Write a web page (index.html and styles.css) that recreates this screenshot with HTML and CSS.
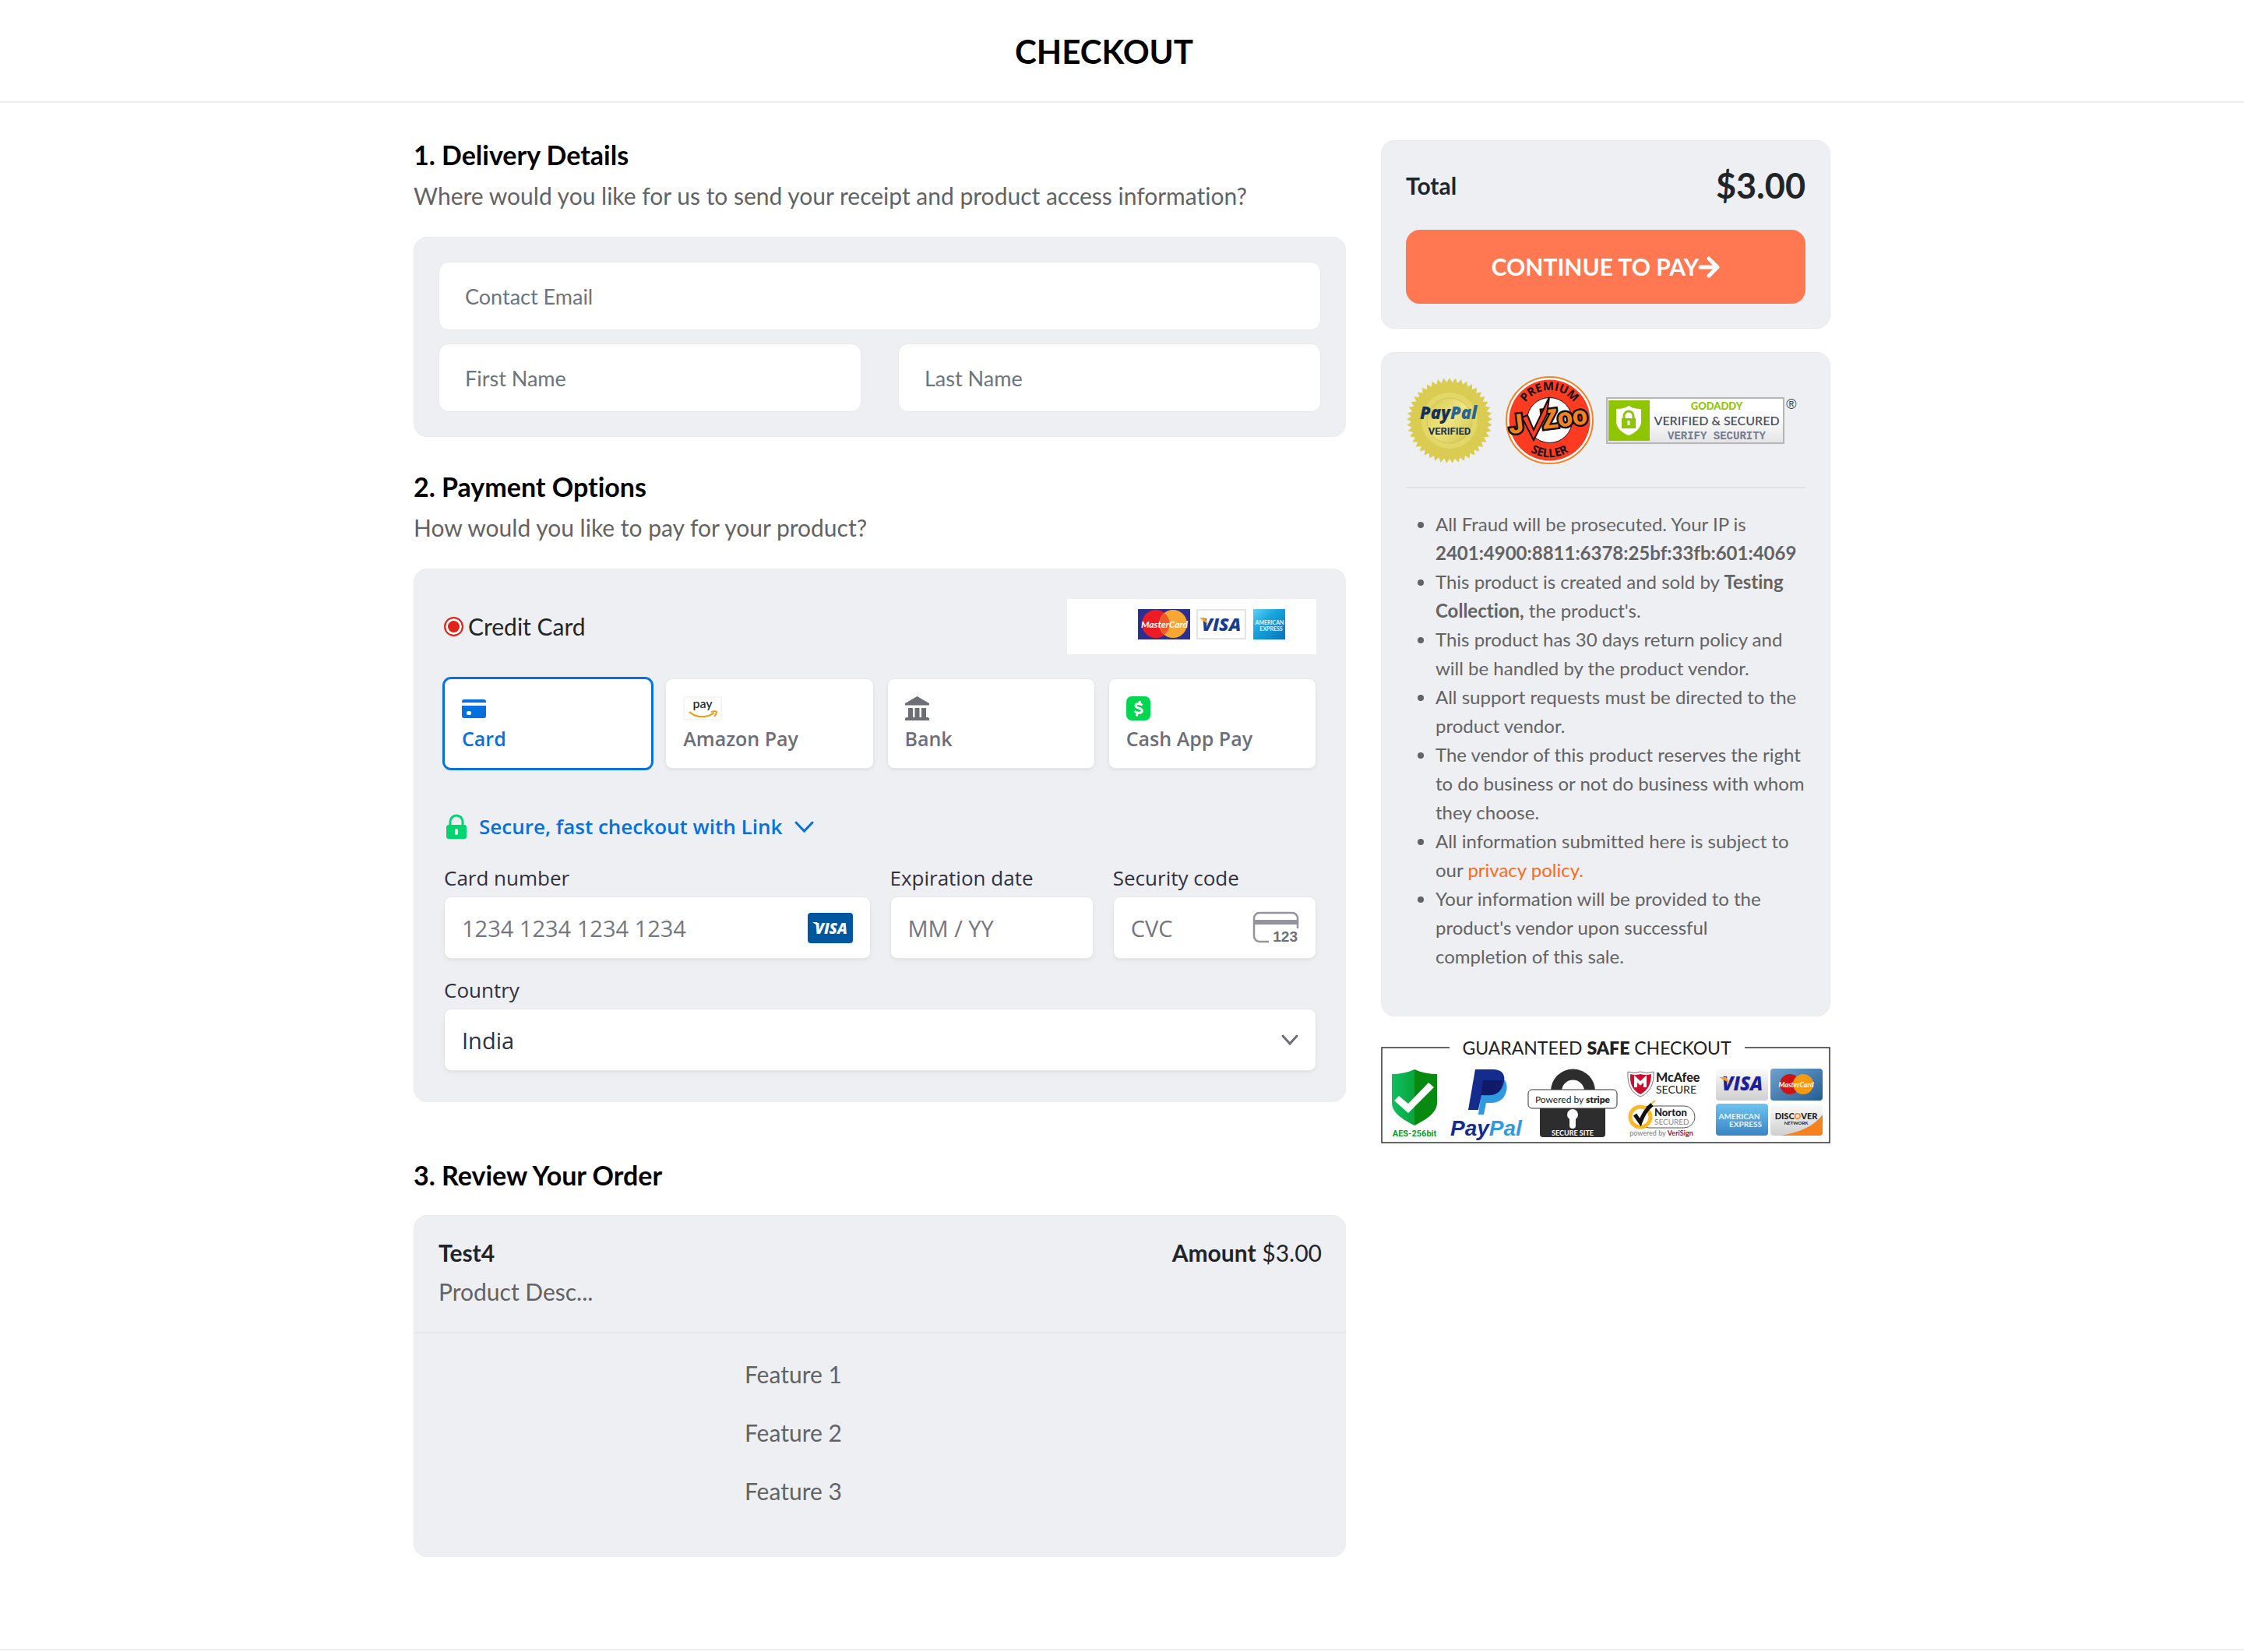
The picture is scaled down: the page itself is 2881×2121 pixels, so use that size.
FILE: index.html
```html
<!DOCTYPE html>
<html lang="en">
<head>
  <meta charset="UTF-8">
  <title>Checkout</title>
  <meta name="viewport" content="width=device-width, initial-scale=1">
  <link rel="stylesheet" href="styles.css">
</head>
<body>
  <header class="page-header">
    <div class="container">
      <h1>CHECKOUT</h1>
    </div>
  </header>

  <main class="container checkout">
    <form class="steps" id="checkout-form">
      <section class="step">
        <h2>1. Delivery Details</h2>
        <p class="lead">Where would you like for us to send your receipt and product access information?</p>
        <div class="panel delivery">
          <input class="text-input wide" type="email" placeholder="Contact Email" aria-label="Contact Email">
          <input class="text-input" type="text" placeholder="First Name" aria-label="First Name">
          <input class="text-input" type="text" placeholder="Last Name" aria-label="Last Name">
        </div>
      </section>

      <section class="step">
        <h2>2. Payment Options</h2>
        <p class="lead">How would you like to pay for your product?</p>
        <div class="panel payment">
          <div class="method">
            <label class="method-label"><input type="radio" name="method" checked>Credit Card</label>
            <svg class="brands" viewBox="0 0 320 71" role="img" aria-label="MasterCard, Visa, American Express">
              <defs>
                <linearGradient id="amex-sq" x1="0" y1="0" x2="1" y2="1">
                  <stop offset="0" stop-color="#5fd0f5"/>
                  <stop offset="0.4" stop-color="#17a5de"/>
                  <stop offset="1" stop-color="#0a72b8"/>
                </linearGradient>
              </defs>
              <rect width="320" height="71" fill="#fff"/>
              <rect x="91" y="13" width="67" height="39" fill="#2b2f8f"/>
              <circle cx="114" cy="32" r="18" fill="#ed1c24"/>
              <circle cx="136" cy="32" r="18" fill="#f6a832"/>
              <path d="M125 18a18 18 0 0 1 0 28a18 18 0 0 1 0-28z" fill="#ee5a28"/>
              <text x="125" y="37" class="mc-text">MasterCard</text>
              <rect x="167" y="14" width="62" height="37" fill="#fff" stroke="#e4e4e4" stroke-width="2"/>
              <text x="198" y="41" class="visa-text">VISA</text>
              <path d="M170 24h7l4 9z" fill="#f6a21b"/>
              <rect x="239" y="13" width="41" height="39" fill="url(#amex-sq)"/>
              <text x="260" y="33" class="amex-text small">AMERICAN</text>
              <text x="262" y="41" class="amex-text small">EXPRESS</text>
            </svg>
          </div>

          <div class="tabs">
            <button type="button" class="tab selected">
              <svg width="31" height="31" viewBox="0 0 31 31"><path d="M3 4h25a3 3 0 0 1 3 3v1H0V7a3 3 0 0 1 3-3zM0 12h31v13a3 3 0 0 1-3 3H3a3 3 0 0 1-3-3zM8 19a2 2 0 0 0-2 2v1a2 2 0 0 0 2 2h2a2 2 0 0 0 2-2v-1a2 2 0 0 0-2-2z" fill="#0570de" fill-rule="evenodd"/></svg>
              Card
            </button>
            <button type="button" class="tab">
              <svg width="50" height="31" viewBox="0 0 50 31">
                <rect x="1" y="1" width="48" height="29" rx="1" fill="#fff" stroke="#ececec"/>
                <text x="25" y="15" class="amazon-text">pay</text>
                <path d="M8 20c9 8 23 8 32 1" fill="none" stroke="#f79400" stroke-width="2"/>
                <path d="M36 20c3-1 6-1 7 0c0 2-1 4-3 6" fill="none" stroke="#f79400" stroke-width="2"/>
              </svg>
              Amazon Pay
            </button>
            <button type="button" class="tab">
              <svg width="31" height="31" viewBox="0 0 31 31"><path d="M15.500 0L31 9v2.500H0V9zM4 15h6v12H4zM12.500 15h6v12h-6zM21 15h6v12h-6zM2 27h27a2 2 0 0 1 2 2v2H0v-2a2 2 0 0 1 2-2z" fill="#6d6e78"/></svg>
              Bank
            </button>
            <button type="button" class="tab">
              <svg width="31" height="31" viewBox="0 0 31 31">
                <rect width="31" height="31" rx="7" fill="#00d64f"/>
                <path d="M20.500 11.500c-3-3-8.500-2.500-8.500.6c0 3.800 8.300 2.300 8.300 6.300c0 3.400-6 4-9.800.6M17.500 6l-.8 3.500M14.200 21.500l-.8 4" fill="none" stroke="#fff" stroke-width="3"/>
              </svg>
              Cash App Pay
            </button>
          </div>

          <button type="button" class="link-toggle">
            <svg width="26" height="32" viewBox="0 0 26 32">
              <path d="M5 16V10a8 8 0 0 1 16 0v6" fill="none" stroke="#00d66f" stroke-width="3"/>
              <path d="M3 14h20a3 3 0 0 1 3 3v12a3 3 0 0 1-3 3H3a3 3 0 0 1-3-3V17a3 3 0 0 1 3-3zM13 19a2 2 0 0 0-2 2v4a2 2 0 0 0 4 0v-4a2 2 0 0 0-2-2z" fill="#00d66f" fill-rule="evenodd"/>
            </svg>
            Secure, fast checkout with Link
            <svg width="25" height="15" viewBox="0 0 25 15"><path d="M2 2l10.500 11L23 2" fill="none" stroke="#0570de" stroke-width="3" stroke-linecap="round"/></svg>
          </button>

          <div class="card-fields">
            <div class="field">
              <label for="card-number">Card number</label>
              <div class="control">
                <input id="card-number" type="text" placeholder="1234 1234 1234 1234">
                <svg width="58" height="39" viewBox="0 0 58 39" role="img" aria-label="Visa">
                  <rect width="58" height="39" rx="4" fill="#00579f"/>
                  <text x="30" y="27" class="visa-chip">VISA</text>
                  <path d="M6 12h6l3 6z" fill="#fff"/>
                </svg>
              </div>
            </div>
            <div class="field">
              <label for="expiry">Expiration date</label>
              <div class="control">
                <input id="expiry" type="text" placeholder="MM / YY">
              </div>
            </div>
            <div class="field">
              <label for="cvc">Security code</label>
              <div class="control">
                <input id="cvc" type="text" placeholder="CVC">
                <svg width="58" height="44" viewBox="0 -2 58 44">
                  <path d="M20 38H8a7 7 0 0 1-7-7V8a7 7 0 0 1 7-7h42a7 7 0 0 1 7 7v13" fill="none" stroke="#93949e" stroke-width="2.500"/>
                  <rect x="1" y="10" width="56" height="6" fill="#93949e"/>
                  <text x="57" y="38" class="cvc-text">123</text>
                </svg>
              </div>
            </div>
            <div class="field full">
              <label for="country">Country</label>
              <div class="control">
                <select id="country">
                  <option>India</option>
                </select>
                <svg class="chevron" width="22" height="14" viewBox="0 0 22 14"><path d="M2 2l9 10l9-10" fill="none" stroke="#6d6e78" stroke-width="3" stroke-linecap="round"/></svg>
              </div>
            </div>
          </div>
        </div>
      </section>

      <section class="step review">
        <h2>3. Review Your Order</h2>
        <div class="panel order">
          <div class="order-head">
            <div class="order-row">
              <strong>Test4</strong>
              <span><strong>Amount</strong> $3.00</span>
            </div>
            <p>Product Desc...</p>
          </div>
          <ul class="features">
            <li>Feature 1</li>
            <li>Feature 2</li>
            <li>Feature 3</li>
          </ul>
        </div>
      </section>
    </form>

    <aside class="sidebar">
      <div class="panel summary">
        <div class="total">
          <span>Total</span>
          <strong>$3.00</strong>
        </div>
        <button type="submit" form="checkout-form" class="pay-btn">CONTINUE TO PAY<svg width="27" height="28" viewBox="0 0 27 28"><path d="M2 14h22M13 3l11 11l-11 11" fill="none" stroke="#fff" stroke-width="5" stroke-linecap="round" stroke-linejoin="round"/></svg></button>
      </div>

      <div class="panel trust">
        <div class="seals">
          <svg width="112" height="112" viewBox="-56 -56 112 112" role="img" aria-label="PayPal Verified">
            <defs>
              <path id="spike" d="M0-55L47.600 27.500H-47.600z"/>
              <linearGradient id="gold" x1="0" y1="0" x2="1" y2="1">
                <stop offset="0" stop-color="#d6c94f"/>
                <stop offset="0.5" stop-color="#ede582"/>
                <stop offset="1" stop-color="#cfc045"/>
              </linearGradient>
            </defs>
            <g fill="#dacb52">
              <use href="#spike"/>
              <use href="#spike" transform="rotate(8)"/>
              <use href="#spike" transform="rotate(16)"/>
              <use href="#spike" transform="rotate(24)"/>
              <use href="#spike" transform="rotate(32)"/>
              <use href="#spike" transform="rotate(40)"/>
              <use href="#spike" transform="rotate(48)"/>
              <use href="#spike" transform="rotate(56)"/>
              <use href="#spike" transform="rotate(64)"/>
              <use href="#spike" transform="rotate(72)"/>
              <use href="#spike" transform="rotate(80)"/>
              <use href="#spike" transform="rotate(88)"/>
              <use href="#spike" transform="rotate(96)"/>
              <use href="#spike" transform="rotate(104)"/>
              <use href="#spike" transform="rotate(112)"/>
            </g>
            <circle r="36" fill="#e2d768"/>
            <circle r="29" fill="url(#gold)" stroke="#d3c654"/>
            <text x="-38" y="-2" class="pp-seal"><tspan fill="#16325c">Pay</tspan><tspan fill="#2a6496">Pal</tspan></text>
            <text x="0" y="18" class="pp-verified">VERIFIED</text>
          </svg>

          <svg width="113" height="113" viewBox="0 0 113 113" role="img" aria-label="JVZoo Premium Seller">
            <defs>
              <path id="arc-top" d="M18 56.500a38.500 38.500 0 0 1 77 0"/>
              <path id="arc-bottom" d="M9 56.500a47.500 47.500 0 0 0 95 0"/>
            </defs>
            <circle cx="56.500" cy="56.500" r="55.500" fill="#fff" stroke="#f58220" stroke-width="2"/>
            <circle cx="56.500" cy="56.500" r="52" fill="#ff3b21"/>
            <circle cx="56.500" cy="56.500" r="29" fill="#fff" stroke="#111" stroke-width="1"/>
            <text class="jv-ring"><textPath href="#arc-top" startOffset="50%">PREMIUM</textPath></text>
            <text class="jv-ring"><textPath href="#arc-bottom" startOffset="50%">SELLER</textPath></text>
            <g transform="rotate(-7 56 60)">
              <text x="4" y="68" class="jv-word">J</text>
              <text x="47" y="67" class="jv-word">Zoo</text>
            </g>
            <path d="M21 53l7-3l8 19l20-42l-3 22l-17 33z" fill="#ff3b21" stroke="#111" stroke-width="2"/>
          </svg>

          <svg width="248" height="60" viewBox="0 0 248 60" role="img" aria-label="GoDaddy Verified and Secured">
            <defs>
              <linearGradient id="plate" x1="0" y1="0" x2="0" y2="1">
                <stop offset="0.4" stop-color="#fff"/>
                <stop offset="1" stop-color="#e4e4e6"/>
              </linearGradient>
            </defs>
            <rect x="1" y="1" width="227" height="58" fill="url(#plate)" stroke="#b5b5b5" stroke-width="2"/>
            <rect x="3" y="4" width="53" height="52" fill="#8fc400"/>
            <path d="M29 11c5 3 10 4 16 4v16c0 9-8 15-16 18c-8-3-16-9-16-18V15c6 0 11-1 16-4z" fill="#fff"/>
            <rect x="20" y="27" width="18" height="13" fill="#8fc400"/>
            <path d="M23 28v-4a6 6 0 0 1 12 0v4" fill="none" stroke="#8fc400" stroke-width="3"/>
            <path d="M29 30v6" stroke="#fff" stroke-width="3"/>
            <text x="142" y="16" class="gd-name">GODADDY</text>
            <text x="142" y="36" class="gd-main">VERIFIED &amp; SECURED</text>
            <text x="142" y="54" class="gd-sub">VERIFY SECURITY</text>
            <text x="238" y="15" class="gd-reg">®</text>
          </svg>
        </div>

        <ul class="terms">
          <li>All Fraud will be prosecuted. Your IP is <strong>2401:4900:8811:6378:25bf:33fb:601:4069</strong></li>
          <li>This product is created and sold by <strong>Testing Collection,</strong> the product's.</li>
          <li>This product has 30 days return policy and will be handled by the product vendor.</li>
          <li>All support requests must be directed to the product vendor.</li>
          <li>The vendor of this product reserves the right to do business or not do business with whom they choose.</li>
          <li>All information submitted here is subject to our <a href="#">privacy policy.</a></li>
          <li>Your information will be provided to the product's vendor upon successful<br>completion of this sale.</li>
        </ul>
      </div>

      <svg class="guarantee" viewBox="0 0 577 140" role="img" aria-label="Guaranteed safe checkout">
        <defs>
          <linearGradient id="shield-l"><stop offset="0" stop-color="#0fbf61"/><stop offset="1" stop-color="#0aa53c"/></linearGradient>
          <linearGradient id="silver" x1="0" y1="0" x2="0" y2="1"><stop offset="0" stop-color="#fbfbfb"/><stop offset="1" stop-color="#cfcfd1"/></linearGradient>
          <linearGradient id="mc-blue" x1="0" y1="0" x2="1" y2="1"><stop offset="0" stop-color="#6fa3cf"/><stop offset="1" stop-color="#235d94"/></linearGradient>
          <linearGradient id="amex-blue" x1="0" y1="0" x2="0" y2="1"><stop offset="0" stop-color="#6cc3f0"/><stop offset="1" stop-color="#3a84c5"/></linearGradient>
        </defs>
        <path d="M88 15H1v122h575V15H467" fill="none" stroke="#333" stroke-width="1.500"/>
        <text x="277" y="24" class="g-title">GUARANTEED <tspan class="heavy">SAFE</tspan> CHECKOUT</text>

        <!-- AES shield -->
        <path d="M43 43c-9 4-19 6-29 6v37c0 13 15 22 29 29z" fill="url(#shield-l)"/>
        <path d="M43 43c9 4 19 6 29 6v37c0 13-15 22-29 29z" fill="#078a10"/>
        <path d="M17 83l6-6l12 10l26-27l7 6l-33 33z" fill="#fff"/>
        <text x="43" y="129" class="g-aes">AES-256bit</text>

        <!-- PayPal -->
        <path d="M131 57h28c6 8 2 29-17 29h-7l-3 15h-7z" fill="#2f9ae0"/>
        <path d="M121 43h23c17 0 17 15 10 26c-5 7-12 8-25 7l-4 19h-13z" fill="#142c8e"/>
        <path d="M131 57h25c0 13-9 20-20 19h-8z" fill="#101a66"/>
        <text x="89" y="128" class="g-paypal"><tspan fill="#142c8e">Pay</tspan><tspan fill="#2f9ae0">Pal</tspan></text>

        <!-- padlock -->
        <path d="M218 71a28.500 28.500 0 0 1 57 0h-14a14.500 14.500 0 0 0-29 0z" fill="#2d2d2d"/>
        <rect x="204" y="88" width="84" height="42" rx="4" fill="#2d2d2d"/>
        <rect x="189" y="69" width="114" height="24" rx="5" fill="#fff" stroke="#333"/>
        <text x="246" y="86" class="g-powered">Powered by <tspan class="heavy">stripe</tspan></text>
        <circle cx="246" cy="101" r="7" fill="#fff"/>
        <path d="M246 103v12" stroke="#fff" stroke-width="8" stroke-linecap="round"/>
        <text x="246" y="128" class="g-site">SECURE SITE</text>

        <!-- McAfee / Norton -->
        <path d="M317 46q8 3 16 0q8 3 17 0c1 16-5 27-17 32c-12-5-17-16-16-32z" fill="#fff" stroke="#777"/>
        <path d="M320 49q7 2 13 0q7 2 14 0c0 12-4 21-14 26c-10-5-14-14-13-26z" fill="#c8102e"/>
        <path d="M327 66V55l6 6l6-6v11" fill="none" stroke="#fff" stroke-width="4"/>
        <text x="353" y="59" class="g-mcafee">McAfee</text>
        <text x="353" y="74" class="g-secure">SECURE</text>
        <rect x="330" y="90" width="73" height="28" rx="14" fill="#fff" stroke="#555"/>
        <circle cx="333" cy="104" r="13" fill="#fff" stroke="#fbb829" stroke-width="5"/>
        <path d="M326 101l7 10c3-9 8-17 15-23" fill="none" stroke="#111" stroke-width="5"/>
        <path d="M347 87l5-4" stroke="#fbb829" stroke-width="2"/>
        <text x="351" y="103" class="g-norton">Norton</text>
        <text x="351" y="114" class="g-secured">SECURED</text>
        <text x="360" y="128" class="g-veri">powered by <tspan class="veri">VeriSign</tspan></text>

        <!-- card brands -->
        <rect x="430" y="42" width="67" height="41" rx="4" fill="url(#silver)"/>
        <text x="464" y="70" class="g-visa">VISA</text>
        <path d="M434 53h9l5 8z" fill="#f6a21b"/>
        <rect x="500" y="42" width="67" height="41" rx="4" fill="url(#mc-blue)"/>
        <circle cx="525" cy="62" r="13" fill="#cc1417"/>
        <circle cx="542" cy="62" r="13" fill="#f79a10"/>
        <text x="533" y="66" class="mc-text g-mc">MasterCard</text>
        <rect x="430" y="87" width="67" height="41" rx="4" fill="url(#amex-blue)"/>
        <text x="460" y="107" class="amex-text">AMERICAN</text>
        <text x="468" y="117" class="amex-text">EXPRESS</text>
        <rect x="500" y="87" width="67" height="41" rx="4" fill="url(#silver)"/>
        <path d="M567 101v23a4 4 0 0 1-4 4h-50c25-4 44-13 54-27z" fill="#f5821f"/>
        <text x="533" y="107" class="g-discover">DISC<tspan fill="#f5821f">O</tspan>VER</text>
        <text x="533" y="114" class="g-network">NETWORK</text>
      </svg>
    </aside>
  </main>

  <footer class="page-footer"></footer>
</body>
</html>
```

FILE: styles.css
```css
* {
  box-sizing: border-box;
}
body {
  margin: 0;
  background: #fff;
  color: #212529;
  font-family: Lato, sans-serif;
  font-size: 30px;
  font-variant-ligatures: no-common-ligatures;
  line-height: 45px;
}
h1, h2, p, ul {
  margin: 0;
}
input, select, button {
  font: inherit;
}
svg {
  display: block;
  flex: none;
  overflow: visible;
}
.container {
  width: 100%;
  max-width: 1819px;
  margin: 0 auto;
}
.page-header {
  border-bottom: 2px solid #ececec;
}
.page-header h1 {
  padding: 39px 46px 37px 0;
  color: #000;
  font-size: 42px;
  font-weight: 700;
  line-height: 54px;
  text-align: center;
}
.checkout {
  display: grid;
  grid-template-columns: minmax(0, 1197fr) minmax(0, 577fr);
  align-items: start;
  gap: 45px;
  padding: 48px 0 118px;
}
.steps {
  display: flex;
  flex-direction: column;
  gap: 45px;
}
.step h2 {
  margin-bottom: 11px;
  color: #000;
  font-size: 34px;
  font-weight: 700;
  line-height: 38px;
}
.lead {
  margin-bottom: 30px;
  color: #636363;
}
.panel {
  background: #eeeff3;
  border-radius: 18px;
  box-shadow: inset 0 0 0 1px #ebebee;
}

/* delivery */
.delivery {
  display: grid;
  grid-template-columns: 1fr 1fr;
  gap: 17px 47px;
  padding: 32px;
}
.text-input {
  width: 100%;
  height: 88px;
  padding: 0 33px;
  border: 1px solid #e9e9ec;
  border-radius: 13px;
  background: #fff;
  font-size: 27px;
}
.text-input::placeholder {
  color: #6c757d;
}
.wide {
  grid-column: 1 / -1;
}

/* payment */
.payment {
  padding: 39px 38px 40px 39px;
}
.method {
  display: flex;
  justify-content: space-between;
  align-items: center;
  margin-bottom: 31px;
}
.method-label {
  display: flex;
  align-items: center;
  gap: 6px;
}
.method-label input {
  appearance: none;
  width: 25px;
  height: 25px;
  margin: 0;
  border: 2px solid #e2231a;
  border-radius: 50%;
  background: #e2231a;
  box-shadow: inset 0 0 0 3px #fff;
}
.brands {
  width: 320px;
  height: 71px;
}
.tabs {
  display: grid;
  grid-template-columns: repeat(4, 1fr);
  gap: 17px;
  margin-bottom: 54px;
  font-family: "Open Sans", sans-serif;
}
.tab {
  display: flex;
  flex-direction: column;
  align-items: flex-start;
  gap: 5px;
  height: 116px;
  padding: 22px;
  border: 1px solid #e6e6e6;
  border-radius: 9px;
  background: #fff;
  box-shadow: 0 2px 3px rgba(0, 0, 0, 0.04), 0 5px 10px rgba(0, 0, 0, 0.02);
  color: #6d6e78;
  font-size: 25px;
  font-weight: 600;
  line-height: 36px;
}
.tab.selected {
  border-color: #0570de;
  box-shadow: 0 0 0 2px #0570de;
  color: #0570de;
}
.link-toggle {
  display: flex;
  align-items: center;
  gap: 16px;
  margin-bottom: 28px;
  padding: 0 3px;
  border: 0;
  background: none;
  color: #0570de;
  font-family: "Open Sans", sans-serif;
  font-size: 26px;
  font-weight: 600;
  line-height: 40px;
}
.card-fields {
  display: grid;
  grid-template-columns: repeat(4, 1fr);
  gap: 22px 25px;
  color: #30313d;
  font-family: "Open Sans", sans-serif;
}
.field:first-child {
  grid-column: span 2;
}
.full {
  grid-column: 1 / -1;
}
.field label {
  display: block;
  margin-bottom: 6px;
  font-size: 26px;
  line-height: 36px;
}
.control {
  display: flex;
  align-items: center;
  height: 80px;
  padding: 0 22px;
  border: 1px solid #e6e6e6;
  border-radius: 9px;
  background: #fff;
  box-shadow: 0 2px 3px rgba(0, 0, 0, 0.04), 0 5px 10px rgba(0, 0, 0, 0.02);
}
.control input,
.control select {
  flex: 1;
  width: 100%;
  min-width: 0;
  height: 100%;
  padding: 0;
  border: 0;
  background: none;
  color: #30313d;
  font-size: 29px;
}
.control input::placeholder {
  color: #757680;
}
.control select {
  appearance: none;
}
.chevron {
  pointer-events: none;
}

/* order */
.review {
  margin-top: 30px;
}
.review h2 {
  margin-bottom: 32px;
}
.order-head {
  padding: 23px 31px 27px 32px;
  border-bottom: 2px solid #e6e7ea;
  line-height: 50px;
}
.order-row {
  display: flex;
  justify-content: space-between;
}
.order-head p,
.features {
  color: #636363;
}
.features {
  width: 29%;
  margin: 0 auto;
  padding: 15px 0 47px;
  list-style: none;
  line-height: 75px;
}

/* sidebar */
.summary {
  margin-bottom: 30px;
  padding: 31px 32px 32px;
}
.total {
  display: flex;
  justify-content: space-between;
  align-items: center;
  margin-bottom: 30px;
  font-weight: 700;
  line-height: 54px;
}
.total strong {
  font-size: 45px;
  font-weight: 700;
}
.pay-btn {
  display: flex;
  justify-content: center;
  align-items: center;
  width: 100%;
  height: 95px;
  border: 0;
  border-radius: 18px;
  background: #ff7852;
  color: #fff;
  font-weight: 700;
}
.trust {
  margin-bottom: 25px;
  padding: 31px 32px 59px;
}
.seals {
  display: flex;
  align-items: center;
  gap: 16px;
  padding-bottom: 29px;
  border-bottom: 2px solid #e0e1e4;
}
.terms {
  padding: 27px 0 0 38px;
  color: #636363;
  font-size: 24px;
  line-height: 37px;
}
.terms a {
  color: #fd6a1c;
  text-decoration: none;
}
.guarantee {
  width: 100%;
  height: auto;
}
.page-footer {
  border-top: 2px solid #ececec;
}

/* text inside the logos */
.mc-text, .visa-text, .visa-chip, .amex-text, .amazon-text, .pp-verified, .jv-ring,
.gd-name, .gd-main, .gd-sub, .gd-reg, .g-title, .g-aes, .g-powered, .g-site,
.g-veri, .g-visa, .g-discover, .g-network {
  text-anchor: middle;
}
.mc-text {
  fill: #fff;
  font: italic 700 12px Lato, sans-serif;
}
.g-mc {
  font-size: 9px;
}
.visa-text {
  fill: #1a3c8f;
  font: italic 900 23px "Open Sans", sans-serif;
}
.visa-chip {
  fill: #fff;
  font: italic 800 19px "Open Sans", sans-serif;
}
.amex-text {
  fill: #e9f6fd;
  font: 700 10px Lato, sans-serif;
}
.amex-text.small {
  font-size: 7px;
}
.amazon-text {
  fill: #232f3e;
  font: 600 16px Lato, sans-serif;
}
.cvc-text {
  fill: #6d6e78;
  font: 700 19px "Liberation Sans", sans-serif;
  text-anchor: end;
}
.pp-seal {
  font: italic 800 22px "Open Sans", sans-serif;
}
.pp-verified {
  fill: #16325c;
  font: 700 13px Roboto, sans-serif;
}
.jv-ring {
  fill: #111;
  font: 700 15px "Open Sans", sans-serif;
}
.jv-word {
  fill: #f58220;
  stroke: #111;
  stroke-width: 5px;
  paint-order: stroke;
  font: 800 34px Roboto, sans-serif;
}
.gd-name {
  fill: #8fc400;
  font: 900 13px Lato, sans-serif;
}
.gd-main {
  fill: #4a5260;
  font: 600 16px Lato, sans-serif;
}
.gd-sub {
  fill: #737b8e;
  font: 700 14px "Liberation Mono", monospace;
}
.gd-reg {
  fill: #444;
  font: 18px "Liberation Sans", sans-serif;
}
.g-title {
  fill: #222;
  font: 23px Lato, sans-serif;
}
.heavy {
  font-weight: 800;
}
.g-aes {
  fill: #0a9a2a;
  font: 700 11px Roboto, sans-serif;
}
.g-paypal {
  font: italic 700 28px "Liberation Sans", sans-serif;
}
.g-powered {
  fill: #222;
  font: 12px Lato, sans-serif;
}
.g-site {
  fill: #fff;
  font: 700 9px Lato, sans-serif;
}
.g-mcafee {
  fill: #222;
  font: 900 16px Lato, sans-serif;
}
.g-secure {
  fill: #222;
  font: 14px Lato, sans-serif;
}
.g-norton {
  fill: #222;
  font: 900 13px Lato, sans-serif;
}
.g-secured {
  fill: #888;
  font: 10px Lato, sans-serif;
}
.g-veri {
  fill: #777;
  font: 9px Lato, sans-serif;
}
.veri {
  fill: #a3123a;
  font-weight: 700;
}
.g-visa {
  fill: #1b1f9c;
  font: italic 800 24px "Open Sans", sans-serif;
}
.g-discover {
  fill: #222;
  font: 900 11px Lato, sans-serif;
}
.g-network {
  fill: #222;
  font: 700 6px Lato, sans-serif;
}
```
